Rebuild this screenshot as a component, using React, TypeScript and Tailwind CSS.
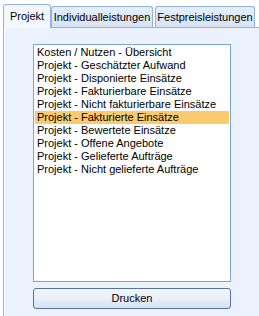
import React from 'react';

const items = [
  'Kosten / Nutzen - Übersicht',
  'Projekt - Geschätzter Aufwand',
  'Projekt - Disponierte Einsätze',
  'Projekt - Fakturierbare Einsätze',
  'Projekt - Nicht fakturierbare Einsätze',
  'Projekt - Fakturierte Einsätze',
  'Projekt - Bewertete Einsätze',
  'Projekt - Offene Angebote',
  'Projekt - Gelieferte Aufträge',
  'Projekt - Nicht gelieferte Aufträge',
];

const Tab: React.FC<{ label: string; active?: boolean; className?: string }> = ({ label, active, className = '' }) => (
  <div
    className={
      active
        ? `relative z-10 -mb-px h-[24px] border border-b-0 border-[#8DB2E3] rounded-t-[3px] bg-[#F4F8FE] flex items-center justify-center ${className}`
        : `h-[21px] border border-b-0 border-[#8DB2E3] rounded-t-[3px] bg-gradient-to-b from-[#E6EEF9] to-[#D7E3F4] flex items-center justify-center ${className}`
    }
  >
    {label}
  </div>
);

export default function App() {
  return (
    <div className="w-[259px] h-[316px] bg-white flex flex-col text-[11px] text-black font-['Liberation_Sans',Arial,sans-serif] overflow-hidden">
      <div className="flex items-end h-[27px] pl-[3px]">
        <Tab label="Projekt" active className="w-[48px]" />
        <Tab label="Individualleistungen" className="w-[102px]" />
        <Tab label="Festpreisleistungen" className="w-[100px] ml-[2px]" />
      </div>
      <div className="flex-1 ml-[3px] border-l border-t border-[#8DB2E3] bg-[#EBF2FD]">
        <div className="h-full border-l border-white pl-[28px] pt-[16px]">
          <div className="w-[198px] h-[238px] border border-[#7EA3D5] bg-white p-px">
            {items.map((it, i) => (
              <div
                key={it}
                className={`h-[13px] leading-[13px] pl-[2px] whitespace-nowrap ${i === 5 ? 'bg-[#F9CB6E]' : ''}`}
              >
                {it}
              </div>
            ))}
          </div>
          <button className="mt-[6px] w-[198px] h-[21px] rounded-[3px] border border-[#5673A0] bg-gradient-to-b from-[#F3F6FB] via-[#E9EFF8] to-[#D3E0F1] text-[11px] text-black flex items-center justify-center">
            Drucken
          </button>
        </div>
      </div>
    </div>
  );
}
